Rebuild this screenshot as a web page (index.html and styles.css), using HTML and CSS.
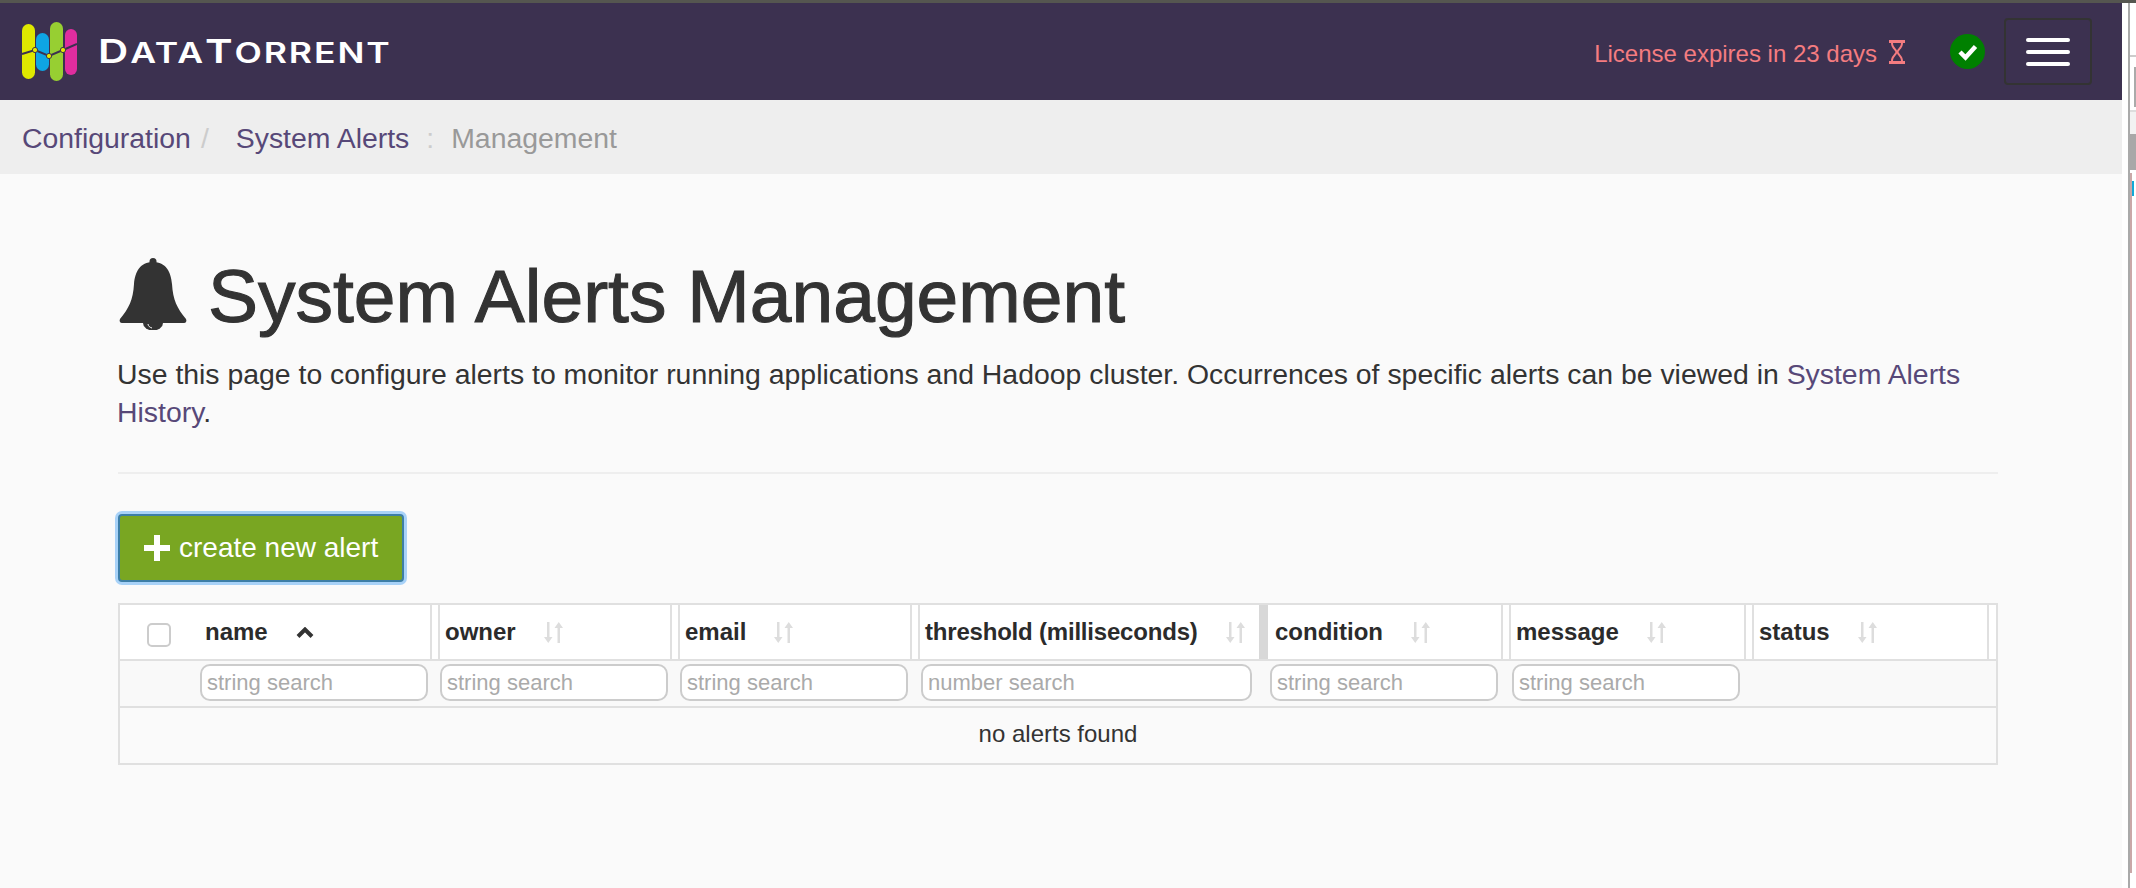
FILE: index.html
```html
<!DOCTYPE html>
<html lang="en">
<head>
<meta charset="utf-8">
<title>System Alerts Management</title>
<link rel="stylesheet" href="styles.css">
</head>
<body>
<div class="topstrip"></div>
<div class="window">
  <div class="app">
    <header class="navbar">
      <a class="brand">
        <svg class="logo" width="56" height="60" viewBox="0 0 56 60">
          <rect x="1" y="2" width="13" height="55" rx="6.5" fill="#dfe800"/>
          <rect x="15" y="11" width="13" height="38" rx="6.5" fill="#0ea5e4"/>
          <rect x="29" y="0" width="13" height="59" rx="6.5" fill="#97cf32"/>
          <rect x="44" y="7" width="12" height="46" rx="6" fill="#e02d9f"/>
          <polyline points="1,32 14,28 28,34 42,28 56,22" fill="none" stroke="#3c3150" stroke-width="2"/>
          <circle cx="14" cy="28" r="2.6" fill="#e6ea00" stroke="#3c3150" stroke-width="1"/>
          <circle cx="28" cy="34" r="2.6" fill="#e6ea00" stroke="#3c3150" stroke-width="1"/>
          <circle cx="42" cy="28" r="2.6" fill="#e6ea00" stroke="#3c3150" stroke-width="1"/>
        </svg>
        <span class="wordmark"><span class="cap">D</span>ATA<span class="cap">T</span>ORRENT</span>
      </a>
      <div class="nav-right">
        <span class="license">License expires in 23 days</span>
        <svg class="hourglass" width="16" height="24" viewBox="0 0 16 24">
          <path d="M0 0H16V3H14C14 8 10 10 9.5 12C10 14 14 16 14 21H16V24H0V21H2C2 16 6 14 6.500 12C6 10 2 8 2 3H0ZM4 3C4 7 8 9 8 11C8 9 12 7 12 3ZM4 21H12C12 17 8 15 8 13C8 15 4 17 4 21Z" fill="#f47c80" fill-rule="evenodd"/>
        </svg>
        <svg class="status" width="35" height="35" viewBox="0 0 35 35">
          <circle cx="17.500" cy="17.500" r="17.500" fill="#008000"/>
          <path d="M10 18L15.500 23.500L25.500 12.500" fill="none" stroke="#fff" stroke-width="4.500"/>
        </svg>
        <button class="menu" type="button" aria-label="menu"><i></i><i></i><i></i></button>
      </div>
    </header>
    <nav class="crumbs">
      <a class="crumb">Configuration</a><span class="sep slash">/</span>
      <a class="crumb">System Alerts</a><span class="sep colon">:</span>
      <span class="current">Management</span>
    </nav>
    <main class="content">
      <h1 class="title">
        <svg class="bell" width="68" height="72" viewBox="0 0 68 72">
          <circle cx="34" cy="3.500" r="3.500" fill="#333"/>
          <path d="M34 4C47 4 52 14 53 26C54 42 58 50 67 61C68 63 67 65 65 65H3C1 65 0 63 1 61C10 50 14 42 15 26C16 14 21 4 34 4Z" fill="#333"/>
          <path d="M24 65A10 7.500 0 0 0 44 65Z" fill="#333"/>
          <path d="M29 66C29 68 31 69.500 33 70" fill="none" stroke="#fafafa" stroke-width="1"/>
        </svg>
        <span>System Alerts Management</span>
      </h1>
      <p class="intro">Use this page to configure alerts to monitor running applications and Hadoop cluster. Occurrences of specific alerts can be viewed in <a>System Alerts History</a>.</p>
      <hr class="rule">
      <button class="create" type="button">
        <svg width="26" height="26" viewBox="0 0 26 26"><path d="M10 0H16V10H26V16H16V26H10V16H0V10H10Z" fill="#fff"/></svg>
        <span>create new alert</span>
      </button>
      <table class="grid">
        <colgroup>
          <col class="c-check"><col class="c-std"><col class="c-std"><col class="c-std"><col class="c-wide"><col class="c-cond"><col class="c-msg"><col class="c-status">
        </colgroup>
        <thead>
          <tr class="head">
            <th class="check"><input class="box" type="checkbox" aria-label="select all"></th>
            <th class="first"><div class="cell">name
              <svg class="chev" width="18" height="11" viewBox="0 0 18 11"><path d="M2 9.500L9 2.500L16 9.500" fill="none" stroke="#333" stroke-width="4"/></svg></div></th>
            <th><div class="cell">owner <svg class="sort" width="19" height="21" viewBox="0 0 19 21"><use href="#s"/></svg></div></th>
            <th><div class="cell">email <svg class="sort" width="19" height="21" viewBox="0 0 19 21"><use href="#s"/></svg></div></th>
            <th><div class="cell thick">threshold (milliseconds) <svg class="sort" width="19" height="21" viewBox="0 0 19 21"><use href="#s"/></svg></div></th>
            <th class="after-thick"><div class="cell">condition <svg class="sort" width="19" height="21" viewBox="0 0 19 21"><use href="#s"/></svg></div></th>
            <th><div class="cell">message <svg class="sort" width="19" height="21" viewBox="0 0 19 21"><use href="#s"/></svg></div></th>
            <th><div class="cell last">status <svg class="sort" width="19" height="21" viewBox="0 0 19 21"><use href="#s"/></svg></div></th>
          </tr>
        </thead>
        <tbody>
          <tr class="filters">
            <td></td>
            <td><input class="search" placeholder="string search"></td>
            <td><input class="search" placeholder="string search"></td>
            <td><input class="search" placeholder="string search"></td>
            <td><input class="search num" placeholder="number search"></td>
            <td><input class="search" placeholder="string search"></td>
            <td><input class="search msg" placeholder="string search"></td>
            <td></td>
          </tr>
          <tr class="empty"><td colspan="8">no alerts found</td></tr>
        </tbody>
      </table>
      <svg class="defs" width="0" height="0"><defs><path id="s" d="M3 0H5.500V15H8.500L4.250 21L0 15H3ZM13.500 21H16V6H19L14.750 0L10.500 6H13.500Z" fill="#ddd"/></defs></svg>
    </main>
  </div>
  <aside class="gutter">
    <div class="g-line"></div>
    <div class="g-panel"></div>
    <div class="g-block"></div>
    <div class="g-pink"><i></i></div>
  </aside>
</div>
</body>
</html>
```

FILE: styles.css
```css
* { box-sizing: border-box; }
html, body { margin: 0; padding: 0; height: 100%; }
body {
  font-family: "Liberation Sans", Arial, sans-serif;
  color: #333;
  background: #fff;
  display: flex;
  flex-direction: column;
  overflow: hidden;
}
.topstrip { height: 3px; background: #555650; flex: none; }
.window { flex: 1; display: flex; min-height: 0; }
.app { width: 2122px; flex: none; background: #fafafa; }

.navbar {
  height: 97px;
  background: #3c3150;
  display: flex;
  align-items: center;
  justify-content: space-between;
}
.brand { display: flex; align-items: center; margin-left: 21px; }
.logo { display: block; }
.wordmark {
  margin-left: 21px;
  font-family: Inter, sans-serif;
  font-weight: 600;
  font-size: 28px;
  letter-spacing: 1.5px;
  color: #fff;
  line-height: 30px;
  white-space: nowrap;
  transform: scaleX(1.27);
  transform-origin: left center;
}
.cap { font-size: 33px; }
.nav-right { display: flex; align-items: center; margin-right: 30px; }
.license { font-size: 24px; color: #f47c80; margin-top: 4px; }
.hourglass { margin-left: 12px; }
.status { margin-left: 45px; }
.menu {
  margin-left: 19px;
  width: 88px;
  height: 67px;
  padding: 0;
  background: transparent;
  border: 2px solid #333;
  border-radius: 4px;
  display: flex;
  flex-direction: column;
  align-items: center;
  justify-content: center;
  gap: 8px;
}
.menu i { display: block; width: 44px; height: 4px; border-radius: 2px; background: #fff; }

.crumbs {
  height: 74px;
  background: #eee;
  padding: 2px 0 0 22px;
  display: flex;
  align-items: center;
  font-size: 28.4px;
}
.crumb { color: #574878; }
.sep { color: #ccc; }
.slash { margin-left: 10px; margin-right: 27px; }
.colon { margin-left: 17px; margin-right: 17px; }
.current { color: #999; }

.content { padding: 79px 124px 0 118px; }
.title {
  margin: 0;
  display: flex;
  align-items: center;
  font-size: 75px;
  font-weight: 400;
  line-height: 86px;
  color: #333;
  -webkit-text-stroke: 1.1px #333;
}
.bell { margin: -4px 21px 0 1px; flex: none; }
.intro { margin: 16px 0 0 -1px; font-size: 28.4px; line-height: 38px; color: #333; }
.intro a { color: #574878; }
.rule { margin: 41px 0 0; border: 0; border-top: 2px solid #eee; }

.create {
  margin: 40px 0 0 0;
  display: flex;
  align-items: center;
  gap: 9px;
  width: 286px;
  height: 68px;
  padding: 0 0 0 24px;
  background: #79a622;
  color: #fff;
  border: 2px solid #3d7ea6;
  border-radius: 4px;
  box-shadow: 0 0 0 3px #a8d2f8;
  font-family: "Liberation Sans", Arial, sans-serif;
  font-size: 28px;
}

.grid {
  margin-top: 21px;
  width: 1880px;
  table-layout: fixed;
  border-collapse: separate;
  border-spacing: 0;
  border: 2px solid #e0e0e0;
}
.c-check { width: 78px; }
.c-std { width: 240px; }
.c-wide { width: 350px; }
.c-cond { width: 241px; }
.c-msg { width: 243px; }
.c-status { width: 244px; }

.head th {
  height: 56px;
  padding: 0;
  background: #fff;
  border-bottom: 2px solid #e0e0e0;
  border-left: 2px solid #e0e0e0;
  font-size: 24px;
  font-weight: 700;
  text-align: left;
}
.head th.check, .head th.first { border-left: 0; }
.head th.check { text-align: center; }
.head th.after-thick { border-left: 0; }
.box {
  appearance: none;
  margin: 4px 0 0;
  width: 24px;
  height: 24px;
  background: #fff;
  border: 2px solid #ccc;
  border-radius: 5px;
  vertical-align: middle;
}
.cell {
  height: 54px;
  margin-right: 6px;
  padding-left: 5px;
  border-right: 2px solid #e0e0e0;
  display: flex;
  align-items: center;
  gap: 28px;
  color: #2b2b2b;
}
.first .cell { padding-left: 7px; }
.cell.thick { margin-right: 0; border-right: 9px solid #d8d8d8; letter-spacing: -0.2px; }
.after-thick .cell { padding-left: 7px; }
.cell.last { margin-right: 7px; }
.sort { margin-top: 1px; flex: none; letter-spacing: 0; }
.chev { margin-top: 0; flex: none; }

.filters td {
  height: 47px;
  padding: 3px 0 0 2px;
  background: #f9f9f9;
  border-bottom: 2px solid #e0e0e0;
  vertical-align: top;
}
.search {
  display: block;
  width: 228px;
  height: 37px;
  padding: 0 4px 0 5px;
  background: #fff;
  border: 2px solid #ccc;
  border-radius: 10px;
  font-family: "Liberation Sans", Arial, sans-serif;
  font-size: 22px;
  color: #333;
}
.search::placeholder { color: #aaa; opacity: 1; }
.search.num { width: 331px; margin-left: 1px; }
.search.msg { margin-left: 1px; }
.empty td {
  height: 55px;
  padding: 0 0 3px;
  text-align: center;
  font-size: 24px;
  color: #333;
  background: #fafafa;
}
.defs { position: absolute; }

.gutter {
  flex: 1;
  margin-left: 6px;
  border-left: 2px solid #aaa;
  background: #fff;
  position: relative;
}
.g-line { height: 54px; border-bottom: 2px solid #ccc; }
.g-panel {
  height: 55px;
  border-bottom: 2px solid #ddd;
  background: #fff;
  position: relative;
}
.g-panel::after {
  content: "";
  position: absolute;
  right: 0;
  top: 10px;
  width: 2px;
  height: 40px;
  background: #aaa;
}
.g-block { margin-top: 0; background: #f2f2f2; border-bottom: 36px solid #a8a8a8; box-sizing: content-box; height: 22px; }
.g-pink { height: 700px; margin-top: 3px; width: 2px; background: #c9a8a8; position: relative; }
.g-pink i {
  position: absolute;
  left: 2px;
  top: 8px;
  width: 2px;
  height: 15px;
  background: #12a9d8;
}
```
